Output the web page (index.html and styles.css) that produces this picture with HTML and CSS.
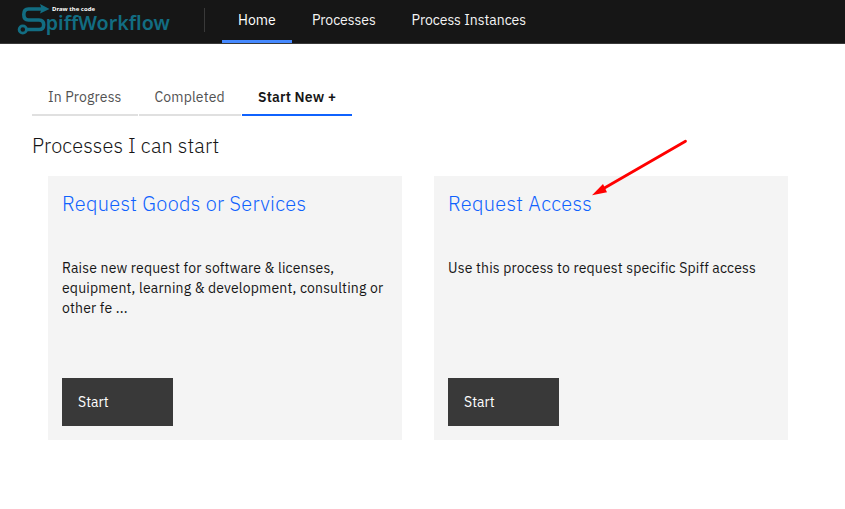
FILE: index.html
```html
<!DOCTYPE html>
<html lang="en">
<head>
<meta charset="utf-8">
<title>SpiffWorkflow</title>
<link rel="stylesheet" href="styles.css">
</head>
<body>
<header class="header">
  <a class="brand" aria-label="SpiffWorkflow">
    <svg class="logo" width="174" height="43" viewBox="0 0 174 43">
      <g fill="none" stroke="#126d82" stroke-width="3.6">
        <path d="M42 9H28.5Q23.8 9 23.8 14.5T28.5 20H39Q43.7 20 43.7 24.8T39 29.5H27"/>
        <circle cx="22.8" cy="29.5" r="3.7" stroke-width="2.8"/>
      </g>
      <path fill="#126d82" d="M40 4l9.5 5L40 13.6l1.5-4.6z"/>
      <text class="tagline" x="52" y="10.8" textLength="43" lengthAdjust="spacingAndGlyphs">Draw the code</text>
      <text class="wordmark" x="45.8" y="30.4" textLength="124" lengthAdjust="spacingAndGlyphs">piffWorkflow</text>
    </svg>
  </a>
  <nav class="nav">
    <a class="nav-item nav-home active">Home</a>
    <a class="nav-item nav-processes">Processes</a>
    <a class="nav-item nav-instances">Process Instances</a>
  </nav>
</header>
<main class="content">
  <div class="tabs">
    <button class="tab tab-progress">In Progress</button>
    <button class="tab tab-completed">Completed</button>
    <button class="tab tab-new selected">Start New +</button>
  </div>
  <h2 class="heading">Processes I can start</h2>
  <div class="tiles">
    <article class="tile">
      <h3 class="tile-title title-goods">Request Goods or Services</h3>
      <p class="tile-text">Raise new request for software &amp; licenses,<br>equipment, learning &amp; development, consulting or<br>other fe ...</p>
      <button class="start">Start</button>
    </article>
    <article class="tile">
      <h3 class="tile-title title-access">Request Access</h3>
      <p class="tile-text">Use this process to request specific Spiff access</p>
      <button class="start">Start</button>
    </article>
  </div>
</main>
<svg class="arrow" width="100" height="62" viewBox="0 0 100 62">
  <path d="M95.5 6.3L14 53.3" stroke="#f00" stroke-width="2.8" stroke-linecap="round"/>
  <path d="M2 60.2L13 49L17 57.2z" fill="#f00"/>
</svg>
</body>
</html>
```

FILE: styles.css
```css
* { box-sizing: border-box; }
body { margin: 0; background: #fff; color: #161616; font: 14px/20px "IBM Plex Sans", Roboto, sans-serif; }
button { border: 0; border-radius: 0; font: inherit; text-align: left; white-space: nowrap; }

.header { display: flex; height: 44px; background: #161616; border-bottom: 1px solid #393939; }
.brand { display: flex; align-items: center; width: 205px; }
.brand::after { content: ""; width: 1px; height: 24px; margin: -3px 0 0 30px; background: #393939; }
.logo { display: block; flex: none; }
.tagline { font: 700 6px "Noto Sans", sans-serif; fill: #fff; }
.wordmark { font: 600 20.5px "Noto Sans", sans-serif; fill: #126d82; }
.nav { display: flex; margin-left: 17px; }
.nav-item { height: 43px; padding: 10px 0 0 16px; color: #f4f4f4; white-space: nowrap; }
.nav-home { width: 70px; color: #fff; }
.nav-processes { width: 98px; margin-left: 4px; letter-spacing: -.03px; }
.nav-instances { width: 148px; margin-left: 1.6px; letter-spacing: -.02px; }
.nav-item.active { border-bottom: 3px solid #4589ff; }

.content { padding: 36px 57px 0 32px; }
.tabs { display: flex; gap: 1px; height: 36px; }
.tab { padding: 0 0 0 16px; border-bottom: 2px solid #e0e0e0; background: transparent; color: #525252; letter-spacing: .16px; }
.tab-progress { width: 106px; }
.tab-completed { width: 102px; padding-left: 15.4px; }
.tab-new { width: 110px; }
.tab.selected { border-color: #0f62fe; color: #161616; font-weight: 600; }
.heading { margin: 16px 0; font-size: 20px; font-weight: 300; line-height: 28px; letter-spacing: .14px; }

.tiles { display: flex; gap: 32px; padding-left: 16px; }
.tile { display: flex; flex-direction: column; width: 354px; height: 264px; padding: 14px; background: #f4f4f4; }
.tile-title { height: 68px; margin: 0; color: #0f62fe; font-size: 20px; font-weight: 300; line-height: 28px; letter-spacing: .32px; }
.tile-text { margin: 0; white-space: nowrap; letter-spacing: .16px; }
.start { width: 111px; height: 48px; margin-top: auto; padding: 0 16px; background: #393939; color: #fff; }

.arrow { position: absolute; left: 590px; top: 135px; }
```
